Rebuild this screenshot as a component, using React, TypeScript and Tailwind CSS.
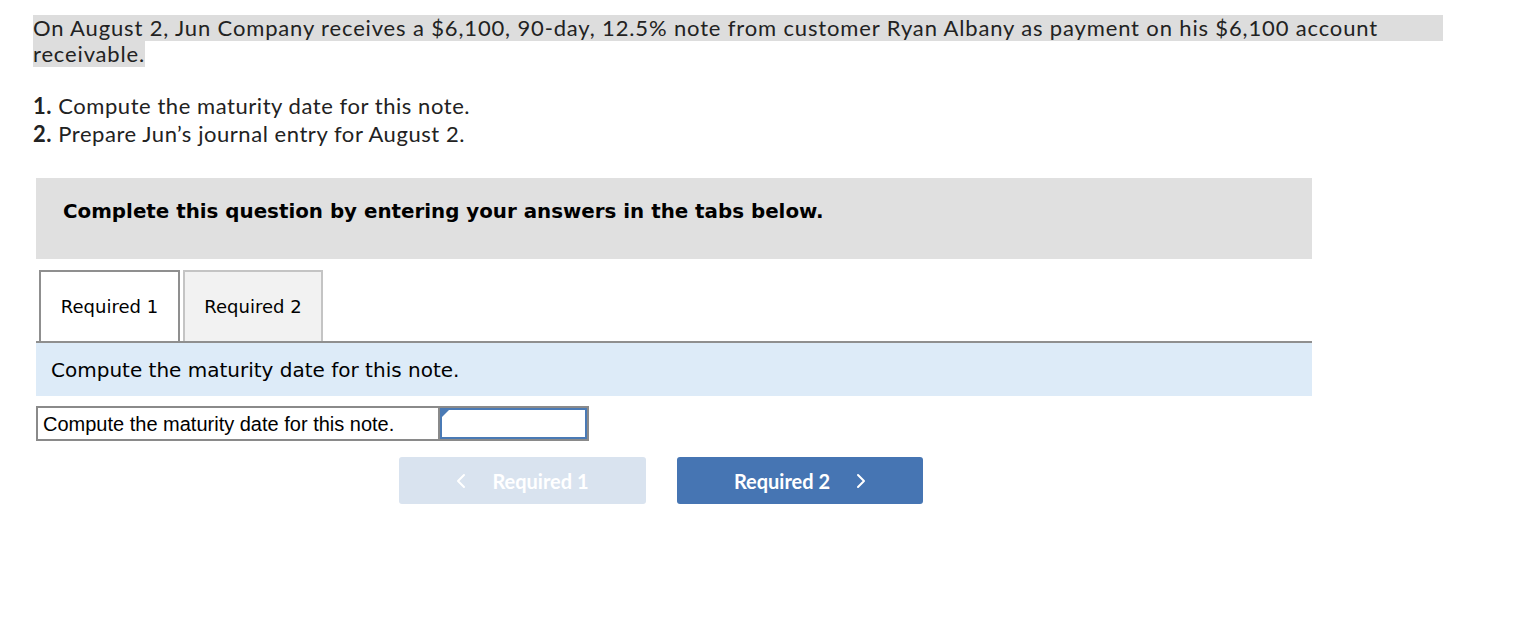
export default function App() {
  const chevron = (dir: "left" | "right") => (
    <svg width="10" height="16" viewBox="0 0 10 16" fill="none" stroke="currentColor" strokeWidth="2" strokeLinecap="round" strokeLinejoin="round">
      {dir === "left" ? <path d="M8 2 2 8l6 6" /> : <path d="M2 2l6 6-6 6" />}
    </svg>
  );

  return (
    <div className="min-h-screen bg-white text-[#222] pt-[15px]">
      {/* question text */}
      <div className="pl-[33px] font-['Lato',sans-serif] text-[22px] leading-[26px]">
        <div className="tracking-[0.85px]">
          <div className="w-[1410px] bg-[#dddddd]">
            On August 2, Jun Company receives a $6,100, 90-day, 12.5% note from customer Ryan Albany as payment on his $6,100 account
          </div>
          <span className="bg-[#dddddd]">receivable.</span>
        </div>
        <div className="mt-[25px] leading-[28px] tracking-[0.55px]">
          <div>
            <b>1.</b> Compute the maturity date for this note.
          </div>
          <div>
            <b>2.</b> Prepare Jun’s journal entry for August 2.
          </div>
        </div>
      </div>

      <div className="ml-[36px] w-[1276px] mt-[30px]">
        <div className="h-[81px] bg-[#e0e0e0] flex items-center pb-[13px] pl-[27px] font-['DejaVu_Sans',Verdana,sans-serif] font-bold text-[19.85px] text-black">
          Complete this question by entering your answers in the tabs below.
        </div>

        {/* tabs */}
        <div className="mt-[11px] flex gap-[3px] pl-[3px] border-b-2 border-[#8f8f8f] font-['DejaVu_Sans',Verdana,sans-serif] text-[18px] text-black">
          <div className="w-[141px] h-[71px] bg-white border-2 border-b-0 border-[#8f8f8f] flex items-center justify-center">
            Required 1
          </div>
          <div className="w-[140px] h-[71px] bg-[#f2f2f2] border-2 border-b-0 border-[#c4c4c4] flex items-center justify-center">
            Required 2
          </div>
        </div>

        <div className="h-[53px] bg-[#ddebf8] flex items-center pl-[15px] font-['DejaVu_Sans',Verdana,sans-serif] text-[20px] text-black">
          Compute the maturity date for this note.
        </div>

        {/* answer row */}
        <div className="mt-[10px] flex w-[553px] h-[35px] border-2 border-[#8a8a8a]">
          <div className="w-[402px] border-r-2 border-[#8a8a8a] flex items-center pl-[5px] font-['Liberation_Sans',Arial,sans-serif] text-[20px] text-black">
            Compute the maturity date for this note.
          </div>
          <div className="relative flex-1 border-2 border-[#4a7ab5] bg-white">
            <div className="absolute top-0 left-0 w-0 h-0 border-t-[7px] border-r-[7px] border-t-[#4a7ab5] border-r-transparent" />
          </div>
        </div>

        {/* nav buttons */}
        <div className="mt-[16px] flex gap-[31px] pl-[363px] font-['Lato',sans-serif] font-bold text-[20px] text-white">
          <div className="w-[247px] h-[47px] rounded-[3px] bg-[#d9e3ef] flex items-center justify-center gap-[26px]">
            {chevron("left")}
            <span>Required 1</span>
          </div>
          <div className="w-[246px] h-[47px] rounded-[3px] bg-[#4675b3] flex items-center justify-center gap-[26px]">
            <span>Required 2</span>
            {chevron("right")}
          </div>
        </div>
      </div>
    </div>
  );
}
